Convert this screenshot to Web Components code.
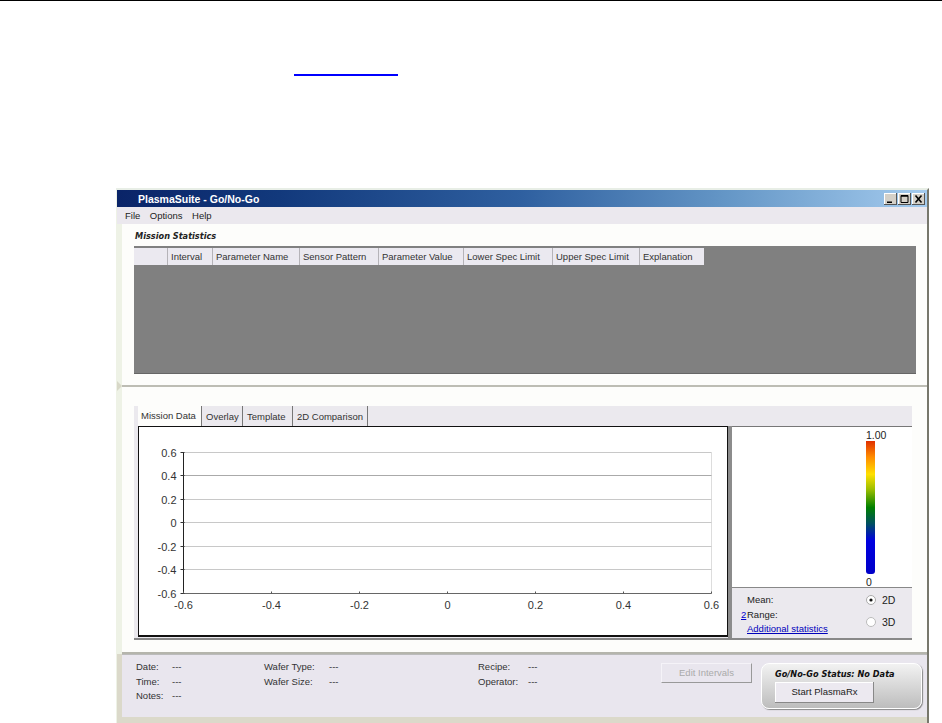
<!DOCTYPE html>
<html>
<head>
<meta charset="utf-8">
<title>PlasmaSuite - Go/No-Go</title>
<style>
html, body { margin: 0; background: #fff; height: 723px; overflow: hidden; font: 9.5px "Liberation Sans", sans-serif; color: #222; }
</style>
</head>
<body>
<doc-page>
  <plasma-window>
    <title-bar slot="title">PlasmaSuite - Go/No-Go</title-bar>
    <menu-bar slot="menu"></menu-bar>
    <stats-panel slot="stats"></stats-panel>
    <chart-panel slot="chart"></chart-panel>
    <status-bar slot="status"></status-bar>
  </plasma-window>
</doc-page>

<script>
function shadow(el, html) {
  el.attachShadow({mode: 'open'}).innerHTML = html
}

class DocPage extends HTMLElement {
  connectedCallback() {
    shadow(this, `<style>
      :host { display: block; height: 723px; box-sizing: border-box; border-top: 1px solid #000; }
      .link { width: 104px; height: 2px; background: #00f; margin: 73px 0 112px 294px; }
      .wrap { margin-left: 116px; width: 813px; }
    </style>
    <div class="link"></div>
    <div class="wrap"><slot></slot></div>`)
  }
}

class PlasmaWindow extends HTMLElement {
  connectedCallback() {
    shadow(this, `<style>
      :host { display: block; height: 535px; box-sizing: border-box; background: #eef2e6; border-right: 2px solid #77776c; border-top: 2px solid #e8eee6; padding-left: 1px; }
      .col { display: flex; flex-direction: column; height: 100%; }
    </style>
    <div class="col">
      <slot name="title"></slot>
      <slot name="menu"></slot>
      <slot name="stats"></slot>
      <slot name="chart"></slot>
      <slot name="status"></slot>
    </div>`)
  }
}

class TitleBar extends HTMLElement {
  connectedCallback() {
    shadow(this, `<style>
      :host { display: flex; align-items: center; height: 17px; flex: none; padding: 0 2px 0 21px;
        background: linear-gradient(90deg, #0a2468 0, #12397c 20%, #2f60a0 50%, #6496c6 75%, #a4cbee 100%);
        color: #fff; font: bold 10.5px "Liberation Sans", sans-serif; }
      .t { flex: 1; }
      .btns { display: flex; gap: 1px; }
      .b { width: 13px; height: 12px; background: #d4d0c8; box-shadow: inset -1px -1px #555, inset 1px 1px #fff; }
      svg { display: block; }
    </style>
    <span class="t"><slot></slot></span>
    <div class="btns">
      <div class="b"><svg width="13" height="12"><path d="M3 8.5h5v1.5H3z" fill="#000"/></svg></div>
      <div class="b"><svg width="13" height="12"><path d="M3 2.5h7v7H3z" fill="none" stroke="#000"/><path d="M3 3h7" stroke="#000" stroke-width="1.5"/></svg></div>
      <div class="b"><svg width="13" height="12"><path d="M3.5 2.5l6 7M9.5 2.5l-6 7" stroke="#000" stroke-width="1.6" fill="none"/></svg></div>
    </div>`)
  }
}

class MenuBar extends HTMLElement {
  connectedCallback() {
    shadow(this, `<style>
      :host { display: flex; gap: 9.5px; align-items: center; height: 17px; flex: none; background: #ebe8ee; padding-left: 8px; color: #222; }
    </style>
    <span>File</span><span>Options</span><span>Help</span>`)
  }
}

class StatsPanel extends HTMLElement {
  connectedCallback() {
    const cols = [['', 34], ['Interval', 45], ['Parameter Name', 87], ['Sensor Pattern', 79], ['Parameter Value', 85], ['Lower Spec Limit', 89], ['Upper Spec Limit', 87], ['Explanation', 64]]
    const cells = cols.map(c => `<div class="h" style="width:${c[1]}px">${c[0]}</div>`).join('')
    shadow(this, `<style>
      :host { display: block; height: 163px; flex: none; box-sizing: border-box; background: #fdfdfb; margin-left: 5px; padding: 6px 11px 0 12px; border-bottom: 2px solid #bdbdb4; position: relative; }
      :host::after { content: ""; position: absolute; left: -5px; bottom: -6px; border-left: 5px solid #d8d8c8; border-top: 5px solid transparent; border-bottom: 5px solid transparent; }
      .cap { font: italic bold 8.2px "DejaVu Sans", sans-serif; color: #222; height: 16px; line-height: 12px; padding-left: 1px; }
      .grid { height: 127px; background: #808080; padding-top: 2px; box-sizing: border-box; box-shadow: 0 1px #666; }
      .row { display: flex; height: 17px; width: max-content; background: #ebe9f0; }
      .h { box-sizing: border-box; padding-left: 3px; line-height: 17px; border-right: 1px solid #b5b3b8; white-space: nowrap; color: #333; }
      .h:last-child { border-right: 0; }
    </style>
    <div class="cap">Mission Statistics</div>
    <div class="grid"><div class="row">${cells}</div></div>`)
  }
}

class ChartPanel extends HTMLElement {
  connectedCallback() {
    shadow(this, `<style>
      :host { display: block; height: 267px; flex: none; box-sizing: border-box; background: #fdfdfb; margin-left: 5px; padding: 19px 15px 0 12px; border-bottom: 2px solid #b5b5ac; }
      .tabs { display: flex; height: 20px; background: #ebe9ee; padding-left: 4px; }
      .tab { box-sizing: border-box; line-height: 22px; padding-left: 4px; border-right: 1px solid #777; color: #333; white-space: nowrap; }
      .tab.on { background: #fdfdfb; line-height: 20px; padding-left: 3px; }
      .body { display: flex; height: 214px; box-sizing: border-box; border-bottom: 2px solid #888; background: #ebe9ee; }
      .gut { width: 4px; flex: none; }
      .plot { width: 590px; flex: none; box-sizing: border-box; border: 1.5px solid #111; border-bottom-width: 2px; background: #fff; height: 211px; }
      .split { width: 4px; flex: none; background: #8c8c8c; }
      .side { flex: 1; display: flex; flex-direction: column; border-top: 1px solid #777; }
      .map { height: 160px; flex: none; background: #fff; border-bottom: 1px solid #888; position: relative; }
      .bar { position: absolute; left: 134px; top: 14px; width: 9px; height: 133px; border-radius: 0 0 3px 3px;
        background: linear-gradient(#e03000 0, #ff8c00 12%, #ffe000 25%, #a0c000 36%, #008000 50%, #005060 62%, #0000e0 75%, #0000c8 100%); }
      .max { position: absolute; left: 134px; top: 2px; font-size: 10.5px; }
      .min { position: absolute; left: 134px; top: 149px; font-size: 10.5px; }
      .foot { flex: 1; display: flex; padding: 5px 0 0 9px; }
      .stat { flex: 1; line-height: 14.5px; }
      .stat div { padding-left: 6px; position: relative; }
      .q { position: absolute; left: 0; color: #00c; text-decoration: underline; }
      a { color: #00b; text-decoration: underline; }
      .modes { width: 46px; display: flex; flex-direction: column; gap: 10px; padding-top: 1px; font-size: 10.5px; }
      .mode { display: flex; align-items: center; gap: 6px; height: 12px; }
      svg { display: block; }
    </style>
    <div class="tabs">
      <div class="tab on" style="width:64px">Mission Data</div>
      <div class="tab" style="width:41px">Overlay</div>
      <div class="tab" style="width:50px">Template</div>
      <div class="tab" style="width:75px">2D Comparison</div>
    </div>
    <div class="body">
      <div class="gut"></div>
      <div class="plot"><xy-plot></xy-plot></div>
      <div class="split"></div>
      <div class="side">
        <div class="map">
          <span class="max">1.00</span>
          <div class="bar"></div>
          <span class="min">0</span>
        </div>
        <div class="foot">
          <div class="stat">
            <div>Mean:</div>
            <div><span class="q">2</span>Range:</div>
            <div><a>Additional statistics</a></div>
          </div>
          <div class="modes">
            <div class="mode"><svg width="10" height="10"><circle cx="5" cy="5" r="4.5" fill="#fff" stroke="#aaa"/><circle cx="5" cy="5" r="1.6" fill="#111"/></svg>2D</div>
            <div class="mode"><svg width="10" height="10"><circle cx="5" cy="5" r="4.5" fill="#fff" stroke="#bbb"/></svg>3D</div>
          </div>
        </div>
      </div>
    </div>`)
  }
}

class XyPlot extends HTMLElement {
  connectedCallback() {
    // frame sits at 138,426 on the page, so plot coords are page minus that
    const ox = 44.5, w = 528, oy = 25.5, h = 141
    const vals = ['0.6', '0.4', '0.2', '0', '-0.2', '-0.4', '-0.6']
    let s = ''
    vals.forEach((v, i) => {
      const y = Math.round(oy + h * i / 6) - .5
      s += `<line x1="${ox}" x2="${ox + w}" y1="${y}" y2="${y}" stroke="${i == 1 ? '#aaa' : i == 6 ? '#666' : '#c8c8c8'}"/>`
      s += `<line x1="${ox - 3}" x2="${ox + 1}" y1="${y}" y2="${y}" stroke="#333"/>`
      s += `<text x="${ox - 7}" y="${y + 4}" text-anchor="end">${v}</text>`
    })
    ;['-0.6', '-0.4', '-0.2', '0', '0.2', '0.4', '0.6'].forEach((v, i) => {
      const x = ox + w * i / 6
      s += `<line x1="${x}" x2="${x}" y1="${oy + h - 2}" y2="${oy + h}" stroke="#555"/>`
      s += `<text x="${x}" y="${oy + h + 15}" text-anchor="middle">${v}</text>`
    })
    shadow(this, `<style>
      :host { display: block; }
      svg { display: block; font: 11px "Liberation Sans", sans-serif; fill: #333; }
    </style>
    <svg width="587" height="207">
      <line x1="${ox + w}" x2="${ox + w}" y1="${oy}" y2="${oy + h}" stroke="#ddd"/>
      <line x1="${ox}" x2="${ox}" y1="${oy}" y2="${oy + h}" stroke="#222"/>
      ${s}
    </svg>`)
  }
}

class StatusBar extends HTMLElement {
  connectedCallback() {
    shadow(this, `<style>
      :host { display: flex; flex: 1; margin-left: 5px; margin-bottom: 6px; background: #e9e6ee; position: relative; border-top: 1px solid #bbb; color: #333; box-shadow: -5px 0 #dbd9ca, -5px 6px #dbd9ca, 0 6px #dbd9ca; }
      .info { display: grid; grid-template-columns: 36px 92px 65px 149px 50px 1fr; grid-auto-rows: 14.5px; padding: 6px 0 0 14px; width: 539px; box-sizing: border-box; }
      .edit { width: 91px; height: 20px; margin-top: 8px; box-sizing: border-box; background: #e9e6ee; color: #aaa; text-align: center; line-height: 18px; border: 1px solid; border-color: #f5f3f8 #999 #999 #f5f3f8; flex: none; }
      .go { width: 161px; height: 46px; margin: 8px 0 0 9px; box-sizing: border-box; padding: 4px 0 0 13px; border-radius: 8px; flex: none;
        background: linear-gradient(#f2f2f2, #bdbdbd); border: 1px solid #fff; box-shadow: 1px 1px 1px #888; }
      .s { font: italic bold 8.2px "DejaVu Sans", sans-serif; color: #111; height: 14px; line-height: 12px; }
      .start { width: 99px; height: 21px; background: #ece9f0; text-align: center; line-height: 20px; color: #222; box-shadow: inset -1px -1px #888, inset 1px 1px #fff; }
    </style>
    <div class="info">
      <span>Date:</span><span>---</span><span>Wafer Type:</span><span>---</span><span>Recipe:</span><span>---</span>
      <span>Time:</span><span>---</span><span>Wafer Size:</span><span>---</span><span>Operator:</span><span>---</span>
      <span>Notes:</span><span>---</span>
    </div>
    <div class="edit">Edit Intervals</div>
    <div class="go">
      <div class="s">Go/No-Go Status: No Data</div>
      <div class="start">Start PlasmaRx</div>
    </div>`)
  }
}

customElements.define('doc-page', DocPage)
customElements.define('plasma-window', PlasmaWindow)
customElements.define('title-bar', TitleBar)
customElements.define('menu-bar', MenuBar)
customElements.define('stats-panel', StatsPanel)
customElements.define('chart-panel', ChartPanel)
customElements.define('xy-plot', XyPlot)
customElements.define('status-bar', StatusBar)
</script>
</body>
</html>
